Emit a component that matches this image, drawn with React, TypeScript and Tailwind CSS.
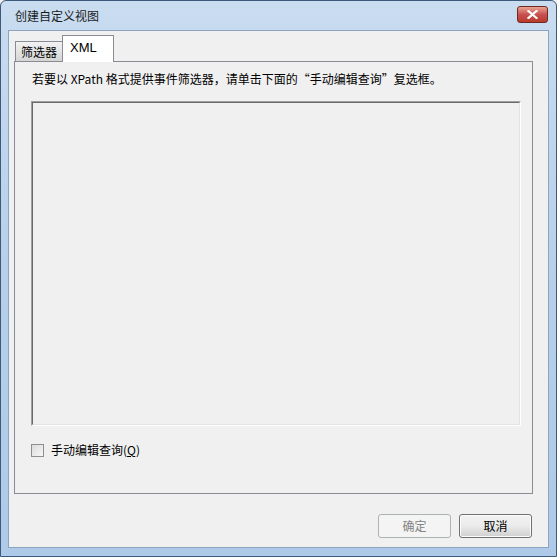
import React, { useState } from 'react';

const CJK = { fontFamily: '"Microsoft YaHei", "Noto Sans CJK SC", "Liberation Sans", sans-serif' };

const CreateViewDialog = () => {
    const [activeTab, setActiveTab] = useState(1);
    const [manualEdit, setManualEdit] = useState(false);

    const tabs = ['筛选器', 'XML'];

    return (
        <div className="w-[557px] h-[557px] overflow-hidden bg-[#f0f0f0]" style={CJK}>
            {/* window frame */}
            <div className="w-full h-full flex flex-col rounded-t-[6px] border border-[#3c5a7a] bg-gradient-to-b from-[#c9dcf0] via-[#b7cfe9] to-[#aecae8]">
                {/* title bar */}
                <div className="h-[29px] flex items-center justify-between pl-[14px] pr-[8px]">
                    <span className="text-[12px] text-[#1a1a1a]">创建自定义视图</span>
                    <button className="w-[31px] h-[17px] -mt-[2px] rounded-[3px] border border-[#6e2a20] bg-gradient-to-b from-[#e8a493] via-[#c75050] to-[#b83a2a] flex items-center justify-center">
                        <svg width="11" height="9" viewBox="0 0 11 9">
                            <path d="M1.5 1 L9.5 8 M9.5 1 L1.5 8" stroke="#ffffff" strokeWidth="2.2" strokeLinecap="square" />
                        </svg>
                    </button>
                </div>

                {/* client area */}
                <div className="flex-1 mx-[7px] mb-[8px] bg-[#f0f0f0] border border-[#8aa4c2] flex flex-col">
                    {/* tab strip */}
                    <div className="h-[30px] flex items-end pl-[6px]">
                        {tabs.map((t, i) => {
                            const active = i === activeTab;
                            return (
                                <button
                                    key={t}
                                    onClick={() => setActiveTab(i)}
                                    className={
                                        active
                                            ? 'h-[27px] w-[52px] -mb-px z-10 bg-white border border-b-0 border-[#898c95] text-[13px] text-black text-left pl-[7px] pb-[4px] flex items-start pt-[2px]'
                                            : 'h-[20px] w-[47px] bg-gradient-to-b from-[#f2f2f2] to-[#d5d5d5] border border-r-0 border-b-0 border-[#898c95] text-[12px] text-black text-left pl-[5px] flex items-center'
                                    }
                                    style={active ? { fontFamily: '"Liberation Sans", Arial, sans-serif' } : undefined}
                                >
                                    {t}
                                </button>
                            );
                        })}
                    </div>

                    {/* tab panel */}
                    <div className="ml-[5px] w-[519px] h-[433px] border border-[#898c95] bg-[#f0f0f0] flex flex-col pl-[16px] pr-[11px]">
                        <p className="text-[12px] text-black mt-[9px] ml-[1px] leading-[16px]">
                            若要以 XPath 格式提供事件筛选器，请单击下面的“手动编辑查询”复选框。
                        </p>

                        <div className="mt-[14px] w-[490px] h-[325px] border border-[#a0a0a0] border-r-white border-b-white">
                            <div className="w-full h-full border border-[#696969] border-r-[#e3e3e3] border-b-[#e3e3e3] bg-[#f0f0f0]" />
                        </div>

                        <label className="mt-[15px] flex items-center gap-[7px] cursor-default">
                            <span
                                onClick={() => setManualEdit(!manualEdit)}
                                className="w-[13px] h-[13px] border border-[#8e8f8f] bg-gradient-to-br from-[#dcdcdc] to-[#f6f6f6] flex items-center justify-center"
                            >
                                {manualEdit && <span className="text-[10px] leading-none">✓</span>}
                            </span>
                            <span className="text-[12px] text-black">
                                手动编辑查询(<span className="underline">Q</span>)
                            </span>
                        </label>
                    </div>

                    {/* buttons */}
                    <div className="flex justify-end gap-[8px] mt-[20px] pr-[16px]">
                        <button
                            disabled
                            className="w-[73px] h-[24px] rounded-[3px] border border-[#adb2b5] bg-[#f4f4f4] text-[12px] text-[#838383]"
                        >
                            确定
                        </button>
                        <button className="w-[73px] h-[24px] rounded-[3px] border border-[#707070] bg-gradient-to-b from-[#f2f2f2] via-[#ebebeb] to-[#cfcfcf] text-[12px] text-black shadow-[inset_0_0_0_1px_#fcfcfc]">
                            取消
                        </button>
                    </div>
                </div>
            </div>
        </div>
    );
};

export default CreateViewDialog;
